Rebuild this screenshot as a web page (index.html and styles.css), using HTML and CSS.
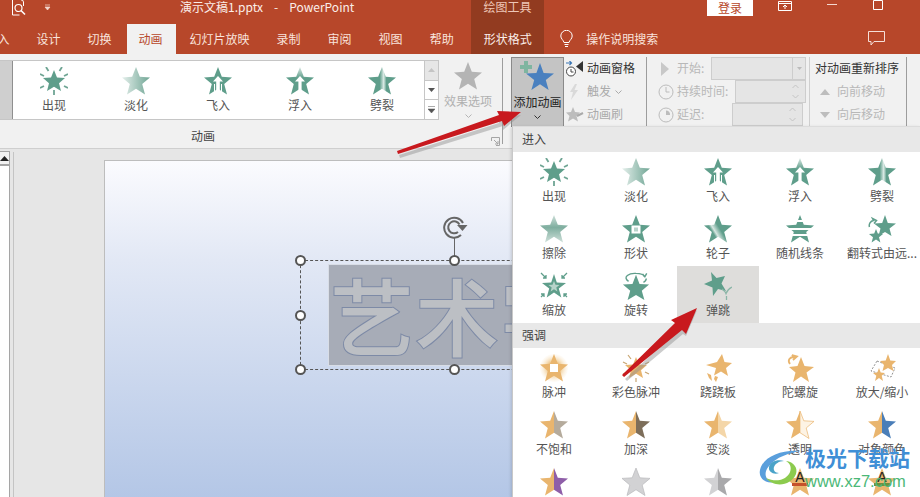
FILE: index.html
```html
<!DOCTYPE html>
<html lang="zh-CN">
<head>
<meta charset="utf-8">
<title>演示文稿1.pptx - PowerPoint</title>
<link rel="stylesheet" href="styles.css">
</head>
<body>
<svg class="defs" width="0" height="0" aria-hidden="true">
  <defs>
    <linearGradient id="gFade" x1="0" x2="1" y1="0" y2="0"><stop offset="0" stop-color="#e4efeb"/><stop offset="1" stop-color="#6fa594"/></linearGradient>
    <linearGradient id="gWipe" x1="0" x2="0" y1="0" y2="1"><stop offset="0" stop-color="#cfe0da"/><stop offset=".45" stop-color="#7fae9f"/><stop offset="1" stop-color="#cfe0da"/></linearGradient>
    <linearGradient id="gTop" x1="0" x2="0" y1="0" y2="1"><stop offset="0" stop-color="#dbe9e4"/><stop offset=".4" stop-color="#5f9e8b"/><stop offset="1" stop-color="#5f9e8b"/></linearGradient>
    <linearGradient id="gSplit" x1="0" x2="1" y1="0" y2="0"><stop offset="0" stop-color="#5f9e8b"/><stop offset=".42" stop-color="#5f9e8b"/><stop offset=".56" stop-color="#dcebe6"/><stop offset=".66" stop-color="#5f9e8b"/><stop offset="1" stop-color="#5f9e8b"/></linearGradient>
    <linearGradient id="gWheel" x1="1" x2="0" y1=".2" y2=".8"><stop offset="0" stop-color="#5f9e8b"/><stop offset=".45" stop-color="#5f9e8b"/><stop offset=".62" stop-color="#d7e6e1"/><stop offset=".7" stop-color="#5f9e8b"/></linearGradient>
    <radialGradient id="gGlow"><stop offset=".45" stop-color="#efc789"/><stop offset="1" stop-color="#fbf0de" stop-opacity=".2"/></radialGradient>
    <polygon id="star" points="14,0 17.800,9.800 28,10.400 20.200,17 23,27.500 14,21.700 5,27.500 7.800,17 0,10.400 10.200,9.800"/>
    <polygon id="halfL" points="14,0 10.200,9.800 0,10.400 7.800,17 5,27.500 14,21.700"/>
    <polygon id="halfR" points="14,0 17.800,9.800 28,10.400 20.200,17 23,27.500 14,21.700"/>

    <symbol id="i-appear" viewBox="0 0 28 28">
      <polygon fill="#5f9e8b" points="14,3 17,10.500 25,11 19,16.200 21,24 14,19.800 7,24 9,16.200 3,11 11,10.500"/>
      <path stroke="#6fa594" stroke-width="1.800" d="M6 0l2.500 4M22 0l-2.500 4M0 7l4 2M28 7l-4 2M0 21l4-2M28 21l-4-2M14 23v5" fill="none"/>
    </symbol>
    <symbol id="i-fade" viewBox="0 0 28 28"><use href="#star" fill="url(#gFade)"/></symbol>
    <symbol id="i-fly" viewBox="0 0 28 28">
      <use href="#star" fill="#5f9e8b"/>
      <path fill="#fff" d="M14 9l5 5.500h-3.200V27h-3.600V14.500H9z"/>
      <path stroke="#fff" stroke-width="1" d="M10.500 17v8M17.500 17v8"/>
    </symbol>
    <symbol id="i-float" viewBox="0 0 28 28">
      <use href="#star" fill="url(#gTop)"/>
      <path fill="#fff" d="M14 9l5 5.500h-3.400V23h-3.200v-8.500H9z"/>
    </symbol>
    <symbol id="i-split" viewBox="0 0 28 28"><use href="#star" fill="url(#gSplit)"/></symbol>
    <symbol id="i-wipe" viewBox="0 0 28 28"><use href="#star" fill="url(#gWipe)"/></symbol>
    <symbol id="i-shape" viewBox="0 0 28 28">
      <use href="#star" fill="#5f9e8b"/>
      <rect x="9.500" y="10.500" width="9" height="8" fill="#fff"/><rect x="12" y="12.500" width="4" height="4" fill="#b8d3ca"/>
    </symbol>
    <symbol id="i-wheel" viewBox="0 0 28 28"><use href="#star" fill="url(#gWheel)"/></symbol>
    <symbol id="i-lines" viewBox="0 0 28 28">
      <use href="#star" fill="#5f9e8b"/>
      <path stroke="#fff" stroke-width="1.800" d="M0 6h28M0 14h28M0 20h28"/>
    </symbol>
    <symbol id="i-flip" viewBox="0 0 28 28">
      <polygon fill="#5f9e8b" points="17,0 19.800,8 28,8.500 21.500,13.500 23.500,21 17,17 10.500,21 12.500,13.500 6,8.500 14.200,8"/>
      <polygon fill="#5f9e8b" points="8,14 9.800,18.500 15,19 11,22.200 12.400,27.500 8,24.500 3.600,27.500 5,22.200 1,19 6.200,18.500"/>
      <path d="M1.500 12a5 5 0 0 1 4-6.500l-1-2 4 2-2.500 3" fill="none" stroke="#5f9e8b" stroke-width="1.500"/>
    </symbol>
    <symbol id="i-zoom" viewBox="0 0 28 28">
      <polygon fill="#5f9e8b" points="14,2 16.800,10.500 26,11 18.800,16.500 21.300,25.500 14,20.500 6.700,25.500 9.200,16.500 2,11 11.200,10.500"/>
      <polygon fill="#b8d3ca" points="14,9 15.500,12.800 19.500,13 16.300,15.500 17.400,19.500 14,17.200 10.600,19.500 11.700,15.500 8.500,13 12.500,12.800"/>
      <path stroke="#5f9e8b" stroke-width="1.300" fill="none" d="M1 1l5 5M6 3v3H3M27 1l-5 5M22 3v3h3M1 25l3-3M4 25v-3H1M27 25l-3-3M24 25v-3h3"/>
    </symbol>
    <symbol id="i-rotate" viewBox="0 0 28 30">
      <polygon fill="#5f9e8b" points="14,3 17.800,12.800 28,13.400 20.200,20 23,30 14,24.700 5,30 7.800,20 0,13.400 10.200,12.800"/>
      <path d="M6 10C-1 5 7 1 14 1.500c4 0 8 1 9 3.500M21 2l2.500 3 2-3.500" fill="none" stroke="#5f9e8b" stroke-width="1.500"/>
      <path d="M22 11c2-1 3-2 3-4" fill="none" stroke="#5f9e8b" stroke-width="1.500"/>
    </symbol>
    <symbol id="i-bounce" viewBox="0 0 28 28">
      <polygon fill="#5f9e8b" points="7,0 12.500,6 21,4 17.500,11.500 22,19 14,17 9,24 8.500,15.500 0,12 8,8.500"/>
      <path d="M18 17c2 1.500 3.500 3 4 4.500 1-3 3-5 6-6.500M22.500 24v4" fill="none" stroke="#8ab5a7" stroke-width="1.300"/>
    </symbol>

    <symbol id="e-pulse" viewBox="0 0 28 28">
      <circle cx="14" cy="14" r="14" fill="url(#gGlow)"/>
      <use href="#star" fill="#e9b56e"/>
      <rect x="10" y="10" width="8" height="8" fill="#fff"/>
    </symbol>
    <symbol id="e-color" viewBox="0 0 28 28">
      <polygon fill="#e9b56e" points="14,3 17,10.500 25,11 19,16.200 21,24 14,19.800 7,24 9,16.200 3,11 11,10.500"/>
      <path stroke="#c9a672" stroke-width="1.200" d="M6 1l3 4M22 1l-3 4M1 8l4 2M27 8l-4 2M1 20l4-2M27 20l-4-2M14 24v4" fill="none"/>
    </symbol>
    <symbol id="e-teeter" viewBox="0 0 28 28">
      <polygon fill="#e9b56e" points="18,0 20.500,8 28,9 22,14 24,22 17,17.500 10,21.500 12,14 2,11 13,8"/>
      <path fill="#e9b56e" d="M3 19l4 2 1 6-3-3zM11 22l3 1-2 5-2-3z"/>
    </symbol>
    <symbol id="e-spin" viewBox="0 0 28 28">
      <polygon fill="#e9b56e" points="15,3 18.500,12 28,13 20.500,18.500 23,28 15,22.500 7,28 9.500,18.500 3,13 11.500,12"/>
      <path d="M4 10C1 6 4 3 8 3l-2-2 5 1.500-4 3.500" fill="none" stroke="#e9b56e" stroke-width="1.800"/>
    </symbol>
    <symbol id="e-grow" viewBox="0 0 28 28">
      <path d="M9 7l18 7-4 9L3 17z" fill="none" stroke="#777" stroke-width=".8" stroke-dasharray="2 1.500"/>
      <polygon fill="#e9b56e" points="20,0 22.300,6.500 28,7 24,11 25.500,17 20,14 14.500,17 16,11 12,7 17.700,6.500"/>
      <polygon fill="#e9b56e" points="11,14 12.700,18.500 17,19 13.700,21.800 15,27 11,24 7,27 8.300,21.800 5,19 9.300,18.500"/>
    </symbol>
    <symbol id="e-desat" viewBox="0 0 28 28"><use href="#halfL" fill="#e9b56e"/><use href="#halfR" fill="#b5ab9c"/></symbol>
    <symbol id="e-dark" viewBox="0 0 28 28"><use href="#halfL" fill="#e9b56e"/><use href="#halfR" fill="#7d6e5a"/></symbol>
    <symbol id="e-light" viewBox="0 0 28 28"><use href="#halfL" fill="#e9b56e"/><use href="#halfR" fill="#f4d6a8"/></symbol>
    <symbol id="e-trans" viewBox="0 0 28 28"><use href="#halfL" fill="#e9b56e"/><use href="#halfR" fill="#fdf3e4" stroke="#e9b56e" stroke-width=".7"/></symbol>
    <symbol id="e-object" viewBox="0 0 28 28"><use href="#halfL" fill="#e9b56e"/><use href="#halfR" fill="#4a7eb8"/></symbol>
    <symbol id="e-purple" viewBox="0 0 28 28"><use href="#halfL" fill="#e9b56e"/><use href="#halfR" fill="#8e5ea8"/></symbol>
    <symbol id="e-silver" viewBox="0 0 28 28"><use href="#star" fill="#d2d2d4" stroke="#b9b9bb" stroke-width=".7"/></symbol>
    <symbol id="e-silver2" viewBox="0 0 28 28"><use href="#halfL" fill="#d2d2d4"/><use href="#halfR" fill="#a9a9ab"/></symbol>
    <symbol id="e-a1" viewBox="0 0 28 28">
      <use href="#star" fill="#e9b56e"/><rect x="6" y="15" width="16" height="3" fill="#c5512a"/>
      <text x="14" y="14" text-anchor="middle" font-family="Liberation Sans" font-size="14" fill="#222">A</text>
    </symbol>
    <symbol id="e-a2" viewBox="0 0 28 28">
      <use href="#star" fill="#e9b56e"/><rect x="6" y="15" width="16" height="3" fill="#6f8f3e"/>
      <text x="14" y="14" text-anchor="middle" font-family="Liberation Sans" font-size="14" fill="#222">A</text>
    </symbol>
  </defs>
</svg>

<div class="app">
  <header class="titlebar">
    <div class="quick">
      <svg class="qa-doc" width="15" height="16" viewBox="0 0 15 16"><path d="M1.500 0v15h7M10 0h1.500l1 2V6" fill="none" stroke="#fff"/><circle cx="7.500" cy="8" r="3.500" fill="none" stroke="#fff" stroke-width="1.200"/><path d="M10 10.500l4 4" stroke="#fff" stroke-width="1.600"/></svg>
      <svg class="qa-more" width="7" height="7" viewBox="0 0 7 7"><path d="M1 1h5M1 3h5l-2.500 3z" fill="#f4d8cf" stroke="#f4d8cf" stroke-width=".7"/></svg>
    </div>
    <div class="doc-title">演示文稿1.pptx&nbsp;&nbsp; - &nbsp;&nbsp;PowerPoint</div>
    <div class="context-title">绘图工具</div>
    <button class="login">登录</button>
    <svg class="win win-ribbon" width="14" height="10" viewBox="0 0 14 10"><path d="M.5.500h13v9H.5zM.5 2.500h13M7 8V4M5 6l2-2 2 2" fill="none" stroke="#fff"/></svg>
    <svg class="win win-min" width="10" height="1" viewBox="0 0 10 1"><path d="M0 .5h10" stroke="#f4d8cf"/></svg>
    <svg class="win win-max" width="10" height="10" viewBox="0 0 10 10"><path d="M.5.500h9v9h-9z" fill="none" stroke="#fff"/></svg>
  </header>

  <nav class="tabs">
    <span class="tab tab-first">入</span>
    <span class="tab">设计</span>
    <span class="tab">切换</span>
    <span class="tab is-active">动画</span>
    <span class="tab">幻灯片放映</span>
    <span class="tab">录制</span>
    <span class="tab">审阅</span>
    <span class="tab">视图</span>
    <span class="tab">帮助</span>
    <span class="tab tab-context">形状格式</span>
    <svg class="bulb" width="13" height="18" viewBox="0 0 13 18"><path d="M4 12.500C3.500 10 .8 9 .8 6a5.700 5.700 0 0 1 11.400 0c0 3-2.700 4-3.200 6.500zM4.500 14.500h4M5 16.500h3" fill="none" stroke="#fff"/></svg>
    <span class="search-hint">操作说明搜索</span>
    <svg class="comment" width="17" height="15" viewBox="0 0 17 15"><path d="M.5.500h16v10H6l-3 3.500v-3.500H.5z" fill="none" stroke="#f6dfd8"/></svg>
  </nav>

  <section class="ribbon">
    <div class="group group-anim">
      <div class="group-body">
        <div class="gallery">
          <div class="gallery-stub"></div>
          <div class="gallery-items">
            <div class="item"><svg class="icon"><use href="#i-appear"/></svg><span>出现</span></div>
            <div class="item"><svg class="icon"><use href="#i-fade"/></svg><span>淡化</span></div>
            <div class="item"><svg class="icon"><use href="#i-fly"/></svg><span>飞入</span></div>
            <div class="item"><svg class="icon"><use href="#i-float"/></svg><span>浮入</span></div>
            <div class="item"><svg class="icon"><use href="#i-split"/></svg><span>劈裂</span></div>
          </div>
          <div class="gallery-scroll">
            <span class="scroll-btn scroll-up"><svg width="7" height="4" viewBox="0 0 7 4"><path d="M0 4l3.500-4L7 4z" fill="#c4c4c4"/></svg></span>
            <span class="scroll-btn"><svg width="7" height="4" viewBox="0 0 7 4"><path d="M0 0l3.500 4L7 0z" fill="#555"/></svg></span>
            <span class="scroll-btn"><svg width="7" height="7" viewBox="0 0 7 7"><path d="M0 .5h7M0 3l3.500 4L7 3z" fill="#555" stroke="#555" stroke-width=".5"/></svg></span>
          </div>
        </div>
        <div class="effect">
          <svg class="effect-star" width="28" height="28" viewBox="0 0 28 28"><use href="#star" fill="#b4b4b4"/></svg>
          <span>效果选项</span>
          <svg class="chev" width="7" height="4" viewBox="0 0 7 4"><path d="M.5.500l3 3 3-3" fill="none" stroke="#b4b4b4"/></svg>
        </div>
      </div>
      <div class="group-label">动画
        <svg class="launcher" width="9" height="9" viewBox="0 0 9 9"><path d="M.5 4V.5h8v8H5M3 3l4 4M7 4v3H4" fill="none" stroke="#a5a5a5"/></svg>
      </div>
    </div>

    <div class="add-anim">
      <svg class="add-icon" width="34" height="30" viewBox="0 0 34 30">
        <polygon fill="#4a80bf" points="20,2 23.600,12 34,12.500 25.800,19 28.600,29 20,23.200 11.400,29 14.200,19 6,12.500 16.400,12"/>
        <path fill="#7fb5a0" d="M4 0h4v4h4v4H8v4H4V8H0V4h4z"/>
      </svg>
      <span>添加动画</span>
      <svg class="chev" width="7" height="4" viewBox="0 0 7 4"><path d="M.5.500l3 3 3-3" fill="none" stroke="#333"/></svg>
    </div>

    <div class="group group-tools">
      <div class="tool is-on">
        <svg width="18" height="16" viewBox="0 0 18 16"><path d="M0 2h5M3.500 0l2 2-2 2" fill="none" stroke="#3a76b5" stroke-width="1.200"/><circle cx="5" cy="10.500" r="4.500" fill="#fff" stroke="#444"/><path d="M5 8v3h2.500" fill="none" stroke="#444"/><path d="M17 0v11l-7-5.500z" fill="#333"/></svg>
        <span>动画窗格</span>
      </div>
      <div class="tool">
        <svg width="18" height="16" viewBox="0 0 18 16"><path d="M9 0L4 8h3l-2 8 7-10H8.500l2.500-6z" fill="#d9d9d9"/></svg>
        <span>触发</span>
        <svg class="chev" width="7" height="4" viewBox="0 0 7 4"><path d="M.5.500l3 3 3-3" fill="none" stroke="#aaa"/></svg>
      </div>
      <div class="tool">
        <svg width="18" height="16" viewBox="0 0 18 16"><polygon points="7,0 9,5 14,5.500 10.500,9 12,14.500 7,11.500 2,14.500 3.500,9 0,5.500 5,5" fill="#bdbdbd"/><path d="M11 9l6-3" stroke="#aaa" stroke-width="2"/></svg>
        <span>动画刷</span>
      </div>
    </div>

    <div class="group group-timing">
      <div class="timing-row">
        <svg class="t-icon" width="16" height="14" viewBox="0 0 16 14"><path d="M3 0l8 7-8 7z" fill="#c8c8c8"/></svg>
        <span class="t-label">开始:</span>
        <div class="field field-start"><span class="field-arrow"><svg width="5" height="3" viewBox="0 0 5 3"><path d="M0 0h5L2.500 3z" fill="#bbb"/></svg></span></div>
      </div>
      <div class="timing-row">
        <svg class="t-icon" width="16" height="16" viewBox="0 0 16 16"><circle cx="8" cy="8" r="7" fill="none" stroke="#bcbcbc"/><path d="M8 3v5h3.500" fill="none" stroke="#bcbcbc"/></svg>
        <span class="t-label">持续时间:</span>
        <div class="field field-dur"><svg class="spin" width="7" height="15" viewBox="0 0 7 15"><path d="M.5 4l3-3 3 3M.5 11l3 3 3-3" fill="none" stroke="#c4c4c4"/></svg></div>
      </div>
      <div class="timing-row">
        <svg class="t-icon" width="16" height="16" viewBox="0 0 16 16"><circle cx="8" cy="8" r="7" fill="none" stroke="#bcbcbc"/><path d="M8 3.500v4.500h4a4 4 0 0 0-4-4.500z" fill="#bcbcbc"/></svg>
        <span class="t-label">延迟:</span>
        <div class="field field-delay"><svg class="spin" width="7" height="15" viewBox="0 0 7 15"><path d="M.5 4l3-3 3 3M.5 11l3 3 3-3" fill="none" stroke="#c4c4c4"/></svg></div>
      </div>
    </div>

    <div class="group group-order">
      <div class="order-title">对动画重新排序</div>
      <div class="order-row"><svg width="10" height="6" viewBox="0 0 10 6"><path d="M0 6l5-6 5 6z" fill="#bdbdbd"/></svg><span>向前移动</span></div>
      <div class="order-row"><svg width="10" height="6" viewBox="0 0 10 6"><path d="M0 0l5 6 5-6z" fill="#bdbdbd"/></svg><span>向后移动</span></div>
    </div>
  </section>

  <main class="workspace">
    <aside class="thumbs">
      <div class="thumbs-up"><svg width="9" height="5" viewBox="0 0 9 5"><path d="M0 5l4.500-5L9 5z" fill="#222"/></svg></div>
    </aside>
    <div class="slide">
      <div class="art-box"><span class="art-text">艺术字</span></div>
      <div class="selection"></div>
      <span class="rotate-line"></span>
      <svg class="rotate-handle" width="25" height="24" viewBox="0 0 25 24"><path d="M18 19a10 10 0 1 1 2-12" fill="none" stroke="#666" stroke-width="2"/><path d="M15 16a6 6 0 1 1 1.500-7.500" fill="none" stroke="#666" stroke-width="2"/><path d="M14 9l10.500 0-5 6z" fill="#666"/></svg>
      <span class="handle h-tl"></span><span class="handle h-tm"></span>
      <span class="handle h-ml"></span>
      <span class="handle h-bl"></span><span class="handle h-bm"></span>
    </div>
  </main>

  <div class="dropdown">
    <div class="section-head">进入</div>
    <div class="grid">
      <div class="item"><svg class="icon"><use href="#i-appear"/></svg><span>出现</span></div>
      <div class="item"><svg class="icon"><use href="#i-fade"/></svg><span>淡化</span></div>
      <div class="item"><svg class="icon"><use href="#i-fly"/></svg><span>飞入</span></div>
      <div class="item"><svg class="icon"><use href="#i-float"/></svg><span>浮入</span></div>
      <div class="item"><svg class="icon"><use href="#i-split"/></svg><span>劈裂</span></div>
      <div class="item"><svg class="icon"><use href="#i-wipe"/></svg><span>擦除</span></div>
      <div class="item"><svg class="icon"><use href="#i-shape"/></svg><span>形状</span></div>
      <div class="item"><svg class="icon"><use href="#i-wheel"/></svg><span>轮子</span></div>
      <div class="item"><svg class="icon"><use href="#i-lines"/></svg><span>随机线条</span></div>
      <div class="item"><svg class="icon"><use href="#i-flip"/></svg><span>翻转式由远...</span></div>
      <div class="item"><svg class="icon"><use href="#i-zoom"/></svg><span>缩放</span></div>
      <div class="item"><svg class="icon"><use href="#i-rotate"/></svg><span>旋转</span></div>
      <div class="item is-hover"><svg class="icon"><use href="#i-bounce"/></svg><span>弹跳</span></div>
    </div>
    <div class="section-head">强调</div>
    <div class="grid">
      <div class="item"><svg class="icon"><use href="#e-pulse"/></svg><span>脉冲</span></div>
      <div class="item"><svg class="icon"><use href="#e-color"/></svg><span>彩色脉冲</span></div>
      <div class="item"><svg class="icon"><use href="#e-teeter"/></svg><span>跷跷板</span></div>
      <div class="item"><svg class="icon"><use href="#e-spin"/></svg><span>陀螺旋</span></div>
      <div class="item"><svg class="icon"><use href="#e-grow"/></svg><span>放大/缩小</span></div>
      <div class="item"><svg class="icon"><use href="#e-desat"/></svg><span>不饱和</span></div>
      <div class="item"><svg class="icon"><use href="#e-dark"/></svg><span>加深</span></div>
      <div class="item"><svg class="icon"><use href="#e-light"/></svg><span>变淡</span></div>
      <div class="item"><svg class="icon"><use href="#e-trans"/></svg><span>透明</span></div>
      <div class="item"><svg class="icon"><use href="#e-object"/></svg><span>对象颜色</span></div>
      <div class="item"><svg class="icon"><use href="#e-purple"/></svg></div>
      <div class="item"><svg class="icon"><use href="#e-silver"/></svg></div>
      <div class="item"><svg class="icon"><use href="#e-silver2"/></svg></div>
      <div class="item"><svg class="icon"><use href="#e-a1"/></svg></div>
      <div class="item"><svg class="icon"><use href="#e-a2"/></svg></div>
    </div>
  </div>

  <svg class="arrows" width="920" height="497" viewBox="0 0 920 497" aria-hidden="true">
    <path fill="#8d8d8d" opacity=".45" d="M399 155l100-32 0-5-2 0 24-3-18 15 0-4-103 32z"/>
    <path fill="#c8191e" d="M397 151l102-36-2-4 24 1-17 14-2-5-104 33z"/>
    <path fill="#8d8d8d" opacity=".45" d="M625 379l51-47-3-3 24-19-11 26-3-2-56 47z"/>
    <path fill="#c8191e" d="M622 375l53-52-4-3 26-12-11 26-4-4-58 47z"/>
  </svg>

  <div class="watermark">
    <svg class="wm-logo" width="46" height="46" viewBox="0 0 46 46">
      <path d="M44 5C26 3 6 10 3 24c-2 9 7 14 14 12C8 35 6 27 12 20 19 11 32 7 44 5z" fill="#5a9fdc"/>
      <path d="M9 32c8 10 25 8 30-4 2-6-2-12-10-13 5 3 6 8 3 13-5 7-14 8-23 4z" fill="#8ccb4e"/>
      <path d="M27 15c-7-2-14 1-15 6-1 5 5 8 10 6-4 0-6-3-5-6 1-3 5-6 10-6z" fill="#4aa3c9"/>
    </svg>
    <div class="wm-text">
      <span class="wm-cn">极光下载站</span>
      <span class="wm-url">www.xz7.com</span>
    </div>
  </div>
</div>
</body>
</html>
```

FILE: styles.css
```css
* { box-sizing: border-box; }
html, body { margin: 0; padding: 0; }
body {
  font-family: "Noto Sans CJK SC", "Liberation Sans", sans-serif;
  font-size: 12px;
  line-height: 1;
  color: #444;
  background: #e6e6e6;
}
.defs { position: absolute; }
svg { display: block; flex: none; }

.app {
  position: relative;
  width: 920px;
  height: 497px;
  overflow: hidden;
  display: flex;
  flex-direction: column;
}

/* Title bar */
.titlebar {
  flex: none;
  height: 24px;
  display: flex;
  align-items: flex-start;
  background: #b7472a;
  color: #fff;
}
.quick {
  width: 180px;
  display: flex;
  align-items: flex-start;
  padding-left: 11px;
}
.qa-more { margin: 4px 0 0 18px; }
.doc-title {
  width: 291px;
  line-height: 14px;
  white-space: nowrap;
  word-spacing: 1px;
  color: #fbeee9;
}
.context-title {
  width: 73px;
  height: 24px;
  line-height: 14px;
  text-align: center;
  background: #923b20;
  color: #eec6b7;
}
.login {
  width: 46px;
  height: 16px;
  margin-left: 163px;
  padding: 0;
  border: 0;
  background: #fff;
  color: #b7472a;
  font: inherit;
  line-height: 14px;
}
.win-ribbon { margin: 1px 0 0 25px; }
.win-min { margin: 4px 0 0 35px; }
.win-max { margin: 0 0 0 36px; }

/* Tabs */
.tabs {
  flex: none;
  height: 30px;
  display: flex;
  align-items: stretch;
  gap: 2px;
  margin-left: -15px;
  background: #b7472a;
  color: #f9e3dc;
}
.tab {
  padding: 0 12.5px;
  line-height: 29px;
  white-space: nowrap;
}
.tab.is-active {
  background: #f1f1f1;
  color: #b7472a;
  margin-left: 1px;
  margin-right: -1px;
  padding: 0 13.5px 0 11.5px;
}
.tab-context {
  background: #923b20;
  color: #fbeee9;
  margin-left: 3px;
  width: 73px;
  text-align: center;
  padding: 0;
}
.bulb { margin: 6px 0 0 14px; }
.search-hint { margin-left: 11px; line-height: 29px; }
.comment { margin: 7px 0 0 208px; }

/* Ribbon */
.ribbon {
  flex: none;
  height: 95px;
  display: flex;
  background: #f1f1f1;
  border-bottom: 1px solid #cfcfcf;
}
.group-anim {
  width: 503px;
  height: 86px;
  margin-top: 4px;
  border-right: 1px solid #9d9d9d;
  position: relative;
  display: flex;
  flex-direction: column;
}
.group-body { display: flex; padding-top: 2px; height: 70px; }
.gallery {
  width: 439px;
  height: 60px;
  display: flex;
  background: #fff;
  border: 1px solid #c6c6c6;
  border-left: 0;
}
.gallery-stub {
  width: 13px;
  background: #cfcfcf;
  border-right: 1px solid #8f8f8f;
}
.gallery-items { display: flex; width: 411px; }
.gallery-items .item { width: 82px; height: 58px; padding-top: 6px; }
.gallery-scroll {
  width: 14px;
  display: flex;
  flex-direction: column;
  border-left: 1px solid #c6c6c6;
}
.scroll-btn {
  flex: 1;
  display: flex;
  align-items: center;
  justify-content: center;
  border-bottom: 1px solid #c6c6c6;
}
.scroll-btn:last-child { border-bottom: 0; }
.scroll-up { background: #e6e6e6; }

.effect {
  width: 58px;
  display: flex;
  flex-direction: column;
  align-items: center;
  padding-top: 2px;
  color: #b0b0b0;
}
.effect span { margin-top: 4px; line-height: 14px; white-space: nowrap; }
.effect .chev { margin-top: 6px; }
.group-label {
  text-align: center;
  width: 406px;
  line-height: 16px;
  margin-top: 6px;
  color: #444;
}
.launcher { position: absolute; left: 491px; top: 79px; }

.add-anim {
  width: 53px;
  height: 70px;
  margin: 3px 0 0 8px;
  background: #c4c4c4;
  border: 1px solid #8a8a8a;
  border-bottom-color: #777;
  display: flex;
  flex-direction: column;
  align-items: center;
  color: #222;
}
.add-icon { margin: 3px 0 0 -1px; }
.add-anim span { margin-top: 4px; line-height: 14px; white-space: nowrap; }
.add-anim .chev { margin-top: 6px; }

.group-tools {
  width: 83px;
  height: 70px;
  margin-top: 3px;
  padding-left: 2px;
  border-right: 1px solid #9d9d9d;
}
.tool {
  height: 23px;
  display: flex;
  align-items: center;
  gap: 3px;
  color: #aaa;
}
.tool span { margin-top: -2px; line-height: 14px; }
.tool.is-on { color: #333; }
.tool .chev { margin-left: 1px; }

.group-timing {
  width: 162px;
  margin-top: 3px;
  padding-left: 11px;
  position: relative;
}
.timing-row {
  height: 23px;
  display: flex;
  align-items: center;
  color: #b8b8b8;
  white-space: nowrap;
}
.t-icon { width: 16px; margin-right: 3px; }
.t-label { line-height: 14px; margin-top: -2px; }
.field {
  height: 23px;
  background: #e5e5e5;
  border: 1px solid #cdcdcd;
  display: flex;
  align-items: center;
  justify-content: flex-end;
}
.field-start { width: 95px; margin-left: 7px; }
.field-dur { width: 71px; margin-left: 7px; padding-right: 6px; }
.field-delay { width: 71px; margin-left: 28px; padding-right: 6px; }
.field-arrow {
  width: 13px;
  height: 100%;
  border-left: 1px solid #cdcdcd;
  display: flex;
  align-items: center;
  justify-content: center;
}

.group-order {
  width: 98px;
  height: 70px;
  margin-top: 3px;
  padding-left: 5px;
  border-left: 1px solid #cfcfcf;
  border-right: 1px solid #9d9d9d;
}
.order-title { height: 23px; line-height: 21px; color: #333; white-space: nowrap; }
.order-row {
  height: 23px;
  display: flex;
  align-items: center;
  gap: 7px;
  padding-left: 5px;
  color: #b8b8b8;
}
.order-row span { margin-top: -2px; line-height: 14px; }

/* Slide area */
.workspace {
  flex: 1;
  display: flex;
  align-items: flex-start;
  background: #e6e6e6;
  min-height: 0;
}
.thumbs {
  position: relative;
  width: 10px;
  height: 100%;
  margin-top: 2px;
  background: #fff;
  border: 1px solid #a5a5a5;
  border-left: 0;
}
.thumbs::after {
  content: "";
  position: absolute;
  left: 13px;
  top: 0;
  bottom: 0;
  width: 1px;
  background: #c4c4c4;
}
.thumbs-up {
  height: 14px;
  background: #f1f1f1;
  border-bottom: 2px solid #a5a5a5;
  display: flex;
  align-items: center;
}
.slide {
  position: relative;
  width: 440px;
  height: 380px;
  margin: 11px 0 0 94px;
  border: 1px solid #bdbdbd;
  background: linear-gradient(#fbfbfe 0, #e2e8f5 100px, #b3c6e6 340px);
}
.art-box {
  position: absolute;
  left: 223px;
  top: 103px;
  width: 200px;
  height: 102px;
  background: #a7acb7;
  border: 1px solid #d8dde6;
  overflow: hidden;
}
.art-text {
  display: block;
  font-size: 84px;
  font-weight: 500;
  line-height: 98px;
  letter-spacing: 1px;
  margin-left: 1px;
  white-space: nowrap;
  color: #bcbfc4;
  -webkit-text-stroke: 2px #7d8aa6;
  paint-order: stroke fill;
}
.selection {
  position: absolute;
  left: 195px;
  top: 99px;
  width: 240px;
  height: 110px;
  border: 1px dashed #555;
}
.rotate-line {
  position: absolute;
  left: 349px;
  top: 76px;
  width: 1px;
  height: 23px;
  background: #666;
}
.rotate-handle { position: absolute; left: 338px; top: 55px; }
.handle {
  position: absolute;
  width: 11px;
  height: 11px;
  border-radius: 50%;
  background: #fff;
  border: 2px solid #555;
}
.h-tl { left: 190px; top: 94px; }
.h-tm { left: 344px; top: 94px; }
.h-ml { left: 190px; top: 149px; }
.h-bl { left: 190px; top: 203px; }
.h-bm { left: 344px; top: 203px; }

/* Animation dropdown */
.dropdown {
  position: absolute;
  left: 512px;
  top: 126px;
  width: 408px;
  height: 371px;
  background: #fff;
  border-left: 1px solid #c8c8c8;
  border-top: 1px solid #dcdcdc;
  box-shadow: -1px 1px 3px rgba(0, 0, 0, .15);
  overflow: hidden;
}
.section-head {
  height: 25px;
  padding-left: 9px;
  line-height: 24px;
  background: #e8e8e8;
  color: #444;
}
.grid {
  display: grid;
  grid-template-columns: repeat(5, 82px);
  grid-auto-rows: 57px;
}
.item {
  display: flex;
  flex-direction: column;
  align-items: center;
  padding-top: 6px;
  color: #555;
  white-space: nowrap;
}
.item span { margin-top: 3px; line-height: 14px; }
.icon { width: 28px; height: 28px; }
.item.is-hover { background: #dedddb; }

/* Overlays */
.arrows { position: absolute; left: 0; top: 0; pointer-events: none; }
.watermark {
  position: absolute;
  left: 757px;
  top: 444px;
  display: flex;
  gap: 2px;
}
.wm-logo { margin-top: 2px; }
.wm-text { display: flex; flex-direction: column; }
.wm-cn {
  font-size: 21px;
  line-height: 26px;
  font-weight: 700;
  color: #3f8fd6;
  white-space: nowrap;
}
.wm-url {
  margin-top: 2px;
  font-family: "Liberation Sans", sans-serif;
  font-size: 16.500px;
  line-height: 18px;
  color: #4cb878;
  white-space: nowrap;
}
```
